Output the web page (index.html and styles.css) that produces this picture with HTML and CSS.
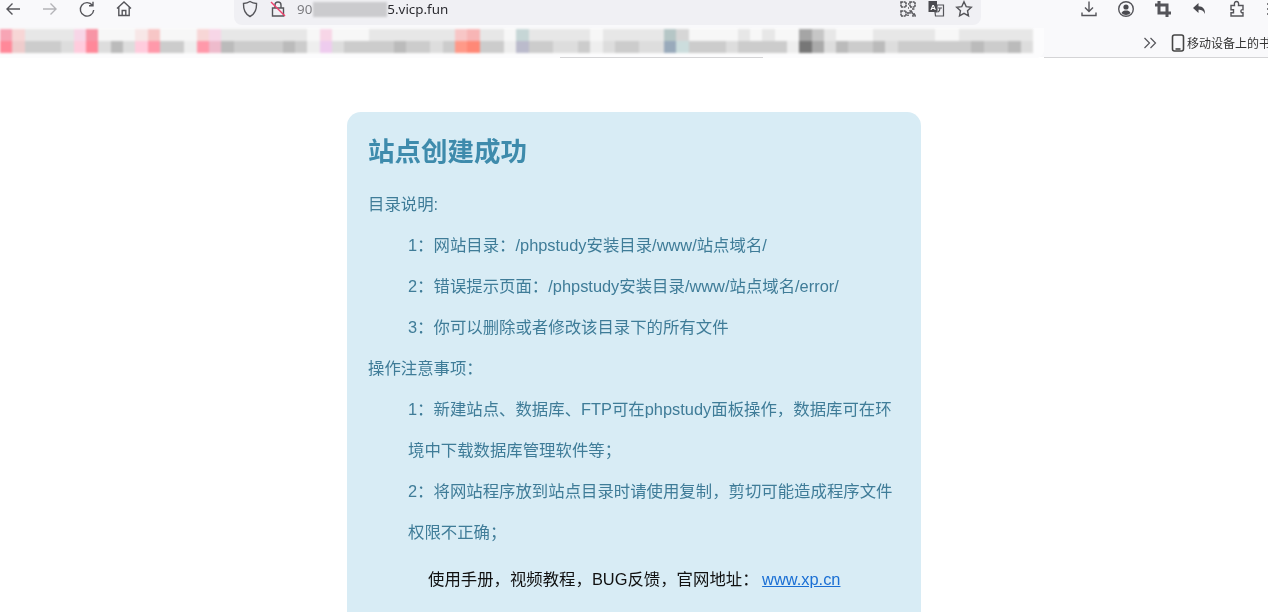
FILE: index.html
```html
<!DOCTYPE html>
<html>
<head>
<meta charset="utf-8">
<title>站点创建成功</title>
<link rel="stylesheet" href="styles.css">
</head>
<body>

<div class="chrome">
  <div class="navbar">
    <div class="nav-group">
      <svg class="icon" viewBox="0 0 18 18"><path d="M16 9H3M8.500 3.500 3 9l5.500 5.500"/></svg>
      <svg class="icon faded" viewBox="0 0 18 18"><path d="M2 9h13M9.500 3.500 15 9l-5.500 5.500"/></svg>
      <svg class="icon" viewBox="0 0 18 18"><path d="M14.500 5.500A6.700 6.700 0 1 0 15.700 10M15 1.800v4h-4"/></svg>
      <svg class="icon" viewBox="0 0 18 18"><path d="M2 8.500 9 2l7 6.500M3.800 7v8.500h10.400V7M7.200 15.500v-5h3.600v5"/></svg>
    </div>
    <div class="address">
      <svg class="icon" viewBox="0 0 18 18"><path d="M9 1.500c2 1.300 4.200 1.900 6.500 2 .2 5.500-1.500 10.500-6.500 13-5-2.500-6.700-7.500-6.500-13 2.300-.1 4.500-.7 6.500-2z"/></svg>
      <svg class="icon" viewBox="0 0 18 18"><path d="M3.500 8h11v8h-11zM6 8V5a3 3 0 0 1 6 0v3"/><path class="slash" d="M2 2l14 14"/></svg>
      <span class="url">90<span class="url-mask"></span><b>5.vicp.fun</b></span>
      <div class="address-actions">
        <svg class="icon" viewBox="0 0 18 18"><path class="thick" d="M2 2h5v5H2zM11 2h5v5h-5zM2 11h5v5H2zM11 11h2v2h-2zM14 14h2v2h-2zM9 4h1M9 8h1M9 12v4M13 9h3"/></svg>
        <svg class="icon" viewBox="0 0 18 18"><path class="solid" d="M1.500 1h8.500v11H1.500z"/><path class="plain" d="M10 5h6.500v11H8.500l-.5-4H10zM11 8h4M13 8c0 2-1 3.500-2 4"/><text class="glyph" x="3.200" y="9.500">A</text></svg>
        <svg class="icon" viewBox="0 0 18 18"><path d="M9 1.800 11.200 6.600l5.100.6-3.800 3.500 1 5.100L9 13.300l-4.500 2.500 1-5.100L1.700 7.200l5.100-.6z"/></svg>
      </div>
    </div>
    <div class="nav-group tools">
      <svg class="icon" viewBox="0 0 18 18"><path d="M9 1.500V11M5 7.500l4 4 4-4M2 12.500v3h14v-3"/></svg>
      <svg class="icon" viewBox="0 0 18 18"><circle cx="9" cy="9" r="7.300"/><circle class="solid" cx="9" cy="7" r="2.600"/><path class="solid" d="M4.500 13c1-2 2.500-2.500 4.500-2.500s3.500.5 4.500 2.500c-1 1.300-2.700 2-4.500 2s-3.500-.7-4.500-2z"/></svg>
      <svg class="icon" viewBox="0 0 18 18"><path class="heavy" d="M5 1v12h12M1 5h12v12"/></svg>
      <svg class="icon" viewBox="0 0 18 18"><path class="solid" d="M7.500 3 2 8l5.500 5V9.800c3 0 5 .8 6.500 4.200.4-4.500-2-7.800-6.500-7.800z"/></svg>
      <svg class="icon" viewBox="0 0 18 18"><path d="M3 5.500h3.500C6 2.500 7 1.500 8.500 1.500S11 2.500 10.500 5.500H15v4.200c-2.800-.6-2.800 3.600 0 3V16H3v-3.200h2.500v-3H3z"/></svg>
      <svg class="icon" viewBox="0 0 18 18"><path d="M2 4h14M2 9h14M2 14h14"/></svg>
    </div>
  </div>

  <div class="bookmarks">
    <div class="mosaic-wrap">
      <div class="mosaic" id="mosaic"></div>
    </div>
    <svg class="chevrons" viewBox="0 0 14 14"><path d="M1.500 2 6.500 7l-5 5M7.500 2l5 5-5 5"/></svg>
    <span class="mobile">
      <svg class="phone" viewBox="0 0 14 18"><rect x="1.500" y="1" width="11" height="16" rx="2"/><path d="M4.500 15h5"/></svg>移动设备上的书
    </span>
  </div>
  <div class="hairline">
    <span class="hairline-mid"></span>
    <span class="hairline-end"></span>
  </div>
</div>

<div class="page">
  <div class="card">
    <h1>站点创建成功</h1>
    <p>目录说明:</p>
    <p class="item">1：网站目录：/phpstudy安装目录/www/站点域名/</p>
    <p class="item">2：错误提示页面：/phpstudy安装目录/www/站点域名/error/</p>
    <p class="item">3：你可以删除或者修改该目录下的所有文件</p>
    <p>操作注意事项：</p>
    <p class="item">1：新建站点、数据库、FTP可在phpstudy面板操作，数据库可在环境中下载数据库管理软件等；</p>
    <p class="item">2：将网站程序放到站点目录时请使用复制，剪切可能造成程序文件权限不正确；</p>
    <p class="links">使用手册，视频教程，BUG反馈，官网地址： <a href="#">www.xp.cn</a></p>
  </div>
</div>

<script src="mosaic.js"></script>
</body>
</html>
```

FILE: styles.css
```css
* {
  box-sizing: border-box;
}

html,
body {
  height: 100%;
}

body {
  margin: 0;
  overflow: hidden;
  background: #fff;
  font-family: "Liberation Sans", "Noto Sans CJK SC", sans-serif;
  filter: blur(.4px);
}

.chrome {
  background: #f9f9fb;
  overflow: hidden;
}

.navbar {
  display: flex;
  height: 28px;
  padding-left: 4px;
  white-space: nowrap;
}

.nav-group {
  display: flex;
  gap: 19px;
  flex: none;
}

.tools {
  margin-left: 99px;
}

.icon {
  width: 18px;
  height: 18px;
  flex: none;
  fill: none;
  stroke: #55555a;
  stroke-width: 1.4;
}

.faded {
  stroke: #b4b4b8;
}

.solid {
  fill: #4a4a4f;
  stroke: none;
}

.plain {
  stroke-width: 1.2;
}

.thick {
  stroke-width: 1.600;
  stroke-dasharray: 2 .6;
}

.heavy {
  stroke-width: 3;
}

.slash {
  stroke: #f0416c;
}

.glyph {
  fill: #fff;
  stroke: none;
  font-size: 8px;
  font-weight: bold;
}

.address {
  display: flex;
  align-items: flex-start;
  flex: none;
  width: 747px;
  height: 25px;
  margin-left: 101px;
  padding-left: 7px;
  background: #f0f0f4;
  border-radius: 0 0 8px 8px;
}

.address > .icon + .icon {
  margin-left: 10px;
}

.url {
  display: flex;
  align-items: center;
  height: 18px;
  margin-left: 10px;
  font-family: "Noto Sans", sans-serif;
  font-size: 13.400px;
  color: #7c7c80;
}

.url b {
  font-weight: normal;
  color: #2b2b30;
}

.url-mask {
  width: 74px;
  height: 15px;
  margin-left: 1px;
  background: #cbcbce;
  filter: blur(1px);
}

.address-actions {
  display: flex;
  gap: 10px;
  margin-left: auto;
  padding-right: 8px;
}

.bookmarks {
  display: flex;
  align-items: center;
  height: 29px;
  white-space: nowrap;
}

.mosaic-wrap {
  flex: none;
  width: 1044px;
  height: 30px;
  background: #fcfcfd;
  border-radius: 0 0 8px 0;
}

.mosaic {
  width: 1033px;
  padding-top: 1px;
  filter: blur(1px);
}

.mosaic-row {
  display: flex;
  height: 12px;
}

.mosaic-row:first-child {
  filter: brightness(.97);
}

.mosaic-row span {
  flex: 1;
}

.chevrons {
  flex: none;
  width: 14px;
  height: 14px;
  margin-left: 99px;
  fill: none;
  stroke: #55555a;
  stroke-width: 1.2;
}

.mobile {
  display: flex;
  align-items: center;
  gap: 2px;
  margin-left: 14px;
  font-size: 12px;
  color: #333;
}

.phone {
  width: 14px;
  height: 18px;
  fill: none;
  stroke: #444;
  stroke-width: 1.6;
}

.hairline {
  display: flex;
  height: 1px;
  background: #fff;
}

.hairline-mid {
  width: 203px;
  margin-left: 560px;
  background: #d4d4d6;
}

.hairline-end {
  width: 224px;
  margin-left: auto;
  background: #d4d4d6;
}

.page {
  display: flex;
  justify-content: center;
}

.card {
  width: 574px;
  margin-top: 54px;
  padding: 20px 20px 60px 21px;
  background: #d8ecf5;
  border-radius: 14px;
  color: #3f7c98;
  font-size: 16.400px;
  line-height: 41px;
}

.card h1 {
  margin: 0 0 12px;
  font-size: 26.500px;
  line-height: 40px;
  color: #3e8bac;
}

.card p {
  margin: 0;
}

.card .item {
  padding-left: 40px;
}

.card .links {
  padding: 6px 0 0 60px;
  color: #111;
}

.card a {
  margin-left: -1px;
  color: #1a6fd4;
}
```

FILE: mosaic.js
```js
// pixelated bookmark names, one colour per block
const topRow = 'fab fdd eee eee eee eee fde f9a fff fff fff fee fcc fff fff fff fdd fde eee eee eee eee eee eee eee fff fde fff fff fff eee eee eee eee eee eee eee fcc fbb eee eee fff cdd eee eee eee eee eee fff eee eee eee eee eee bcc ddd fff fff fff fff eee fff eee fff fff aaa ccc eee fff fff fff eee eee eee eee eee fff fff eee eee eee eee eee eee'.split(' ');
const bottomRow = 'f89 ecc ccc ccc ccc ddd fcd f89 ddd bbb ddd fcd f9a ccc ccc eee f9a ebc bbb ccc ccc ccc ccc bbb ccc eee ece ddd ccc ccc ccc ccc bbb ccc ccc ddd ccc f98 f87 ccc ccc eee bbc ccc ccc ddd ddd ccc eee ddd ccc ccc ddd ddd 9ab cdd ccc ccc ccc ddd ccc ccc ccc ccc eee 777 aaa ddd bbb ccc ccc bbb ddd ccc ccc ccc ccc ccc ccc bbb ccc ccc bbb ddd'.split(' ');

function addRow(colours) {
  const row = document.createElement('div');
  row.className = 'mosaic-row';
  colours.forEach(function (c) {
    const cell = document.createElement('span');
    cell.style.background = '#' + c;
    row.appendChild(cell);
  });
  document.getElementById('mosaic').appendChild(row);
}

addRow(topRow);
addRow(bottomRow);
```
